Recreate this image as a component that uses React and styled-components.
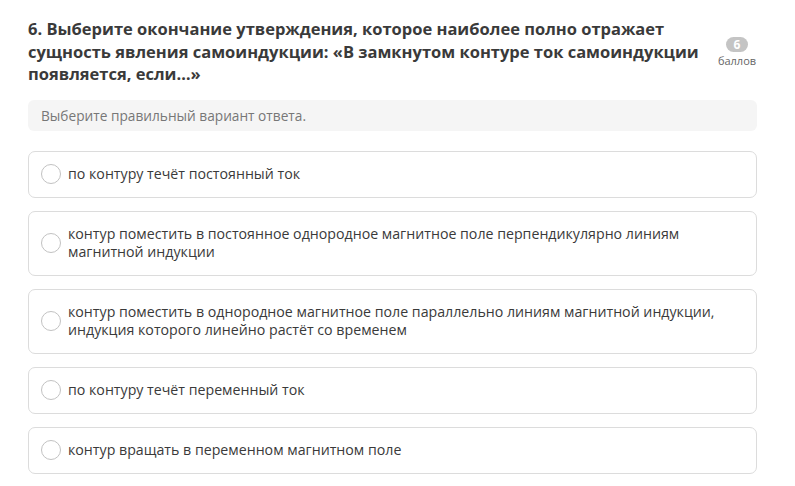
import React from 'react';
import styled, { createGlobalStyle } from 'styled-components';

const GlobalStyle = createGlobalStyle`
  body {
    margin: 0;
    background: #fff;
    font-family: "Open Sans", "Liberation Sans", sans-serif;
  }
`;

const Page = styled.div`
  padding: 18px 38px 12px 28px;
`;

const Header = styled.div`
  display: flex;
  align-items: flex-start;
  justify-content: space-between;
`;

const Title = styled.h2`
  margin: 0;
  font-family: "Open Sans", "Liberation Sans", sans-serif;
  font-size: 16.5px;
  font-weight: 700;
  line-height: 22.5px;
  color: #3a3a3a;
  width: 680px;
`;

const Score = styled.div`
  display: flex;
  flex-direction: column;
  align-items: center;
  margin-top: 19px;
  width: 40px;
`;

const Pill = styled.span`
  background: #c4c4c4;
  color: #fff;
  font-size: 12px;
  font-weight: 700;
  line-height: 15px;
  min-width: 22px;
  text-align: center;
  border-radius: 8px;
`;

const ScoreLabel = styled.span`
  font-size: 11px;
  line-height: 14px;
  color: #666;
  margin-top: 2px;
`;

const Hint = styled.div`
  margin-top: 14px;
  background: #f5f5f5;
  border-radius: 6px;
  padding: 6px 13px;
  font-size: 13.7px;
  line-height: 19px;
  color: #777;
`;

const Options = styled.div`
  display: flex;
  flex-direction: column;
  gap: 13px;
  margin-top: 20px;
`;

const Option = styled.label`
  display: flex;
  align-items: center;
  gap: 7px;
  border: 1px solid #dcdcdc;
  border-radius: 7px;
  padding: 13.5px 12px;
  cursor: pointer;
`;

const Radio = styled.span`
  flex: none;
  box-sizing: border-box;
  width: 20px;
  height: 20px;
  margin: -2px 0;
  border: 1px solid #c2c2c2;
  border-radius: 50%;
  background: #fff;
`;

const Text = styled.span`
  font-size: 14.2px;
  line-height: 18px;
  color: #3a3a3a;
  max-width: 660px;
`;

const answers = [
  'по контуру течёт постоянный ток',
  'контур поместить в постоянное однородное магнитное поле перпендикулярно линиям магнитной индукции',
  'контур поместить в однородное магнитное поле параллельно линиям магнитной индукции, индукция которого линейно растёт со временем',
  'по контуру течёт переменный ток',
  'контур вращать в переменном магнитном поле',
];

export default function App() {
  return (
    <Page>
      <GlobalStyle />
      <Header>
        <Title>
          6. Выберите окончание утверждения, которое наиболее полно отражает сущность явления самоиндукции: «В замкнутом контуре ток самоиндукции появляется, если…»
        </Title>
        <Score>
          <Pill>6</Pill>
          <ScoreLabel>баллов</ScoreLabel>
        </Score>
      </Header>
      <Hint>Выберите правильный вариант ответа.</Hint>
      <Options>
        {answers.map(a => (
          <Option key={a}>
            <Radio />
            <Text>{a}</Text>
          </Option>
        ))}
      </Options>
    </Page>
  );
}
